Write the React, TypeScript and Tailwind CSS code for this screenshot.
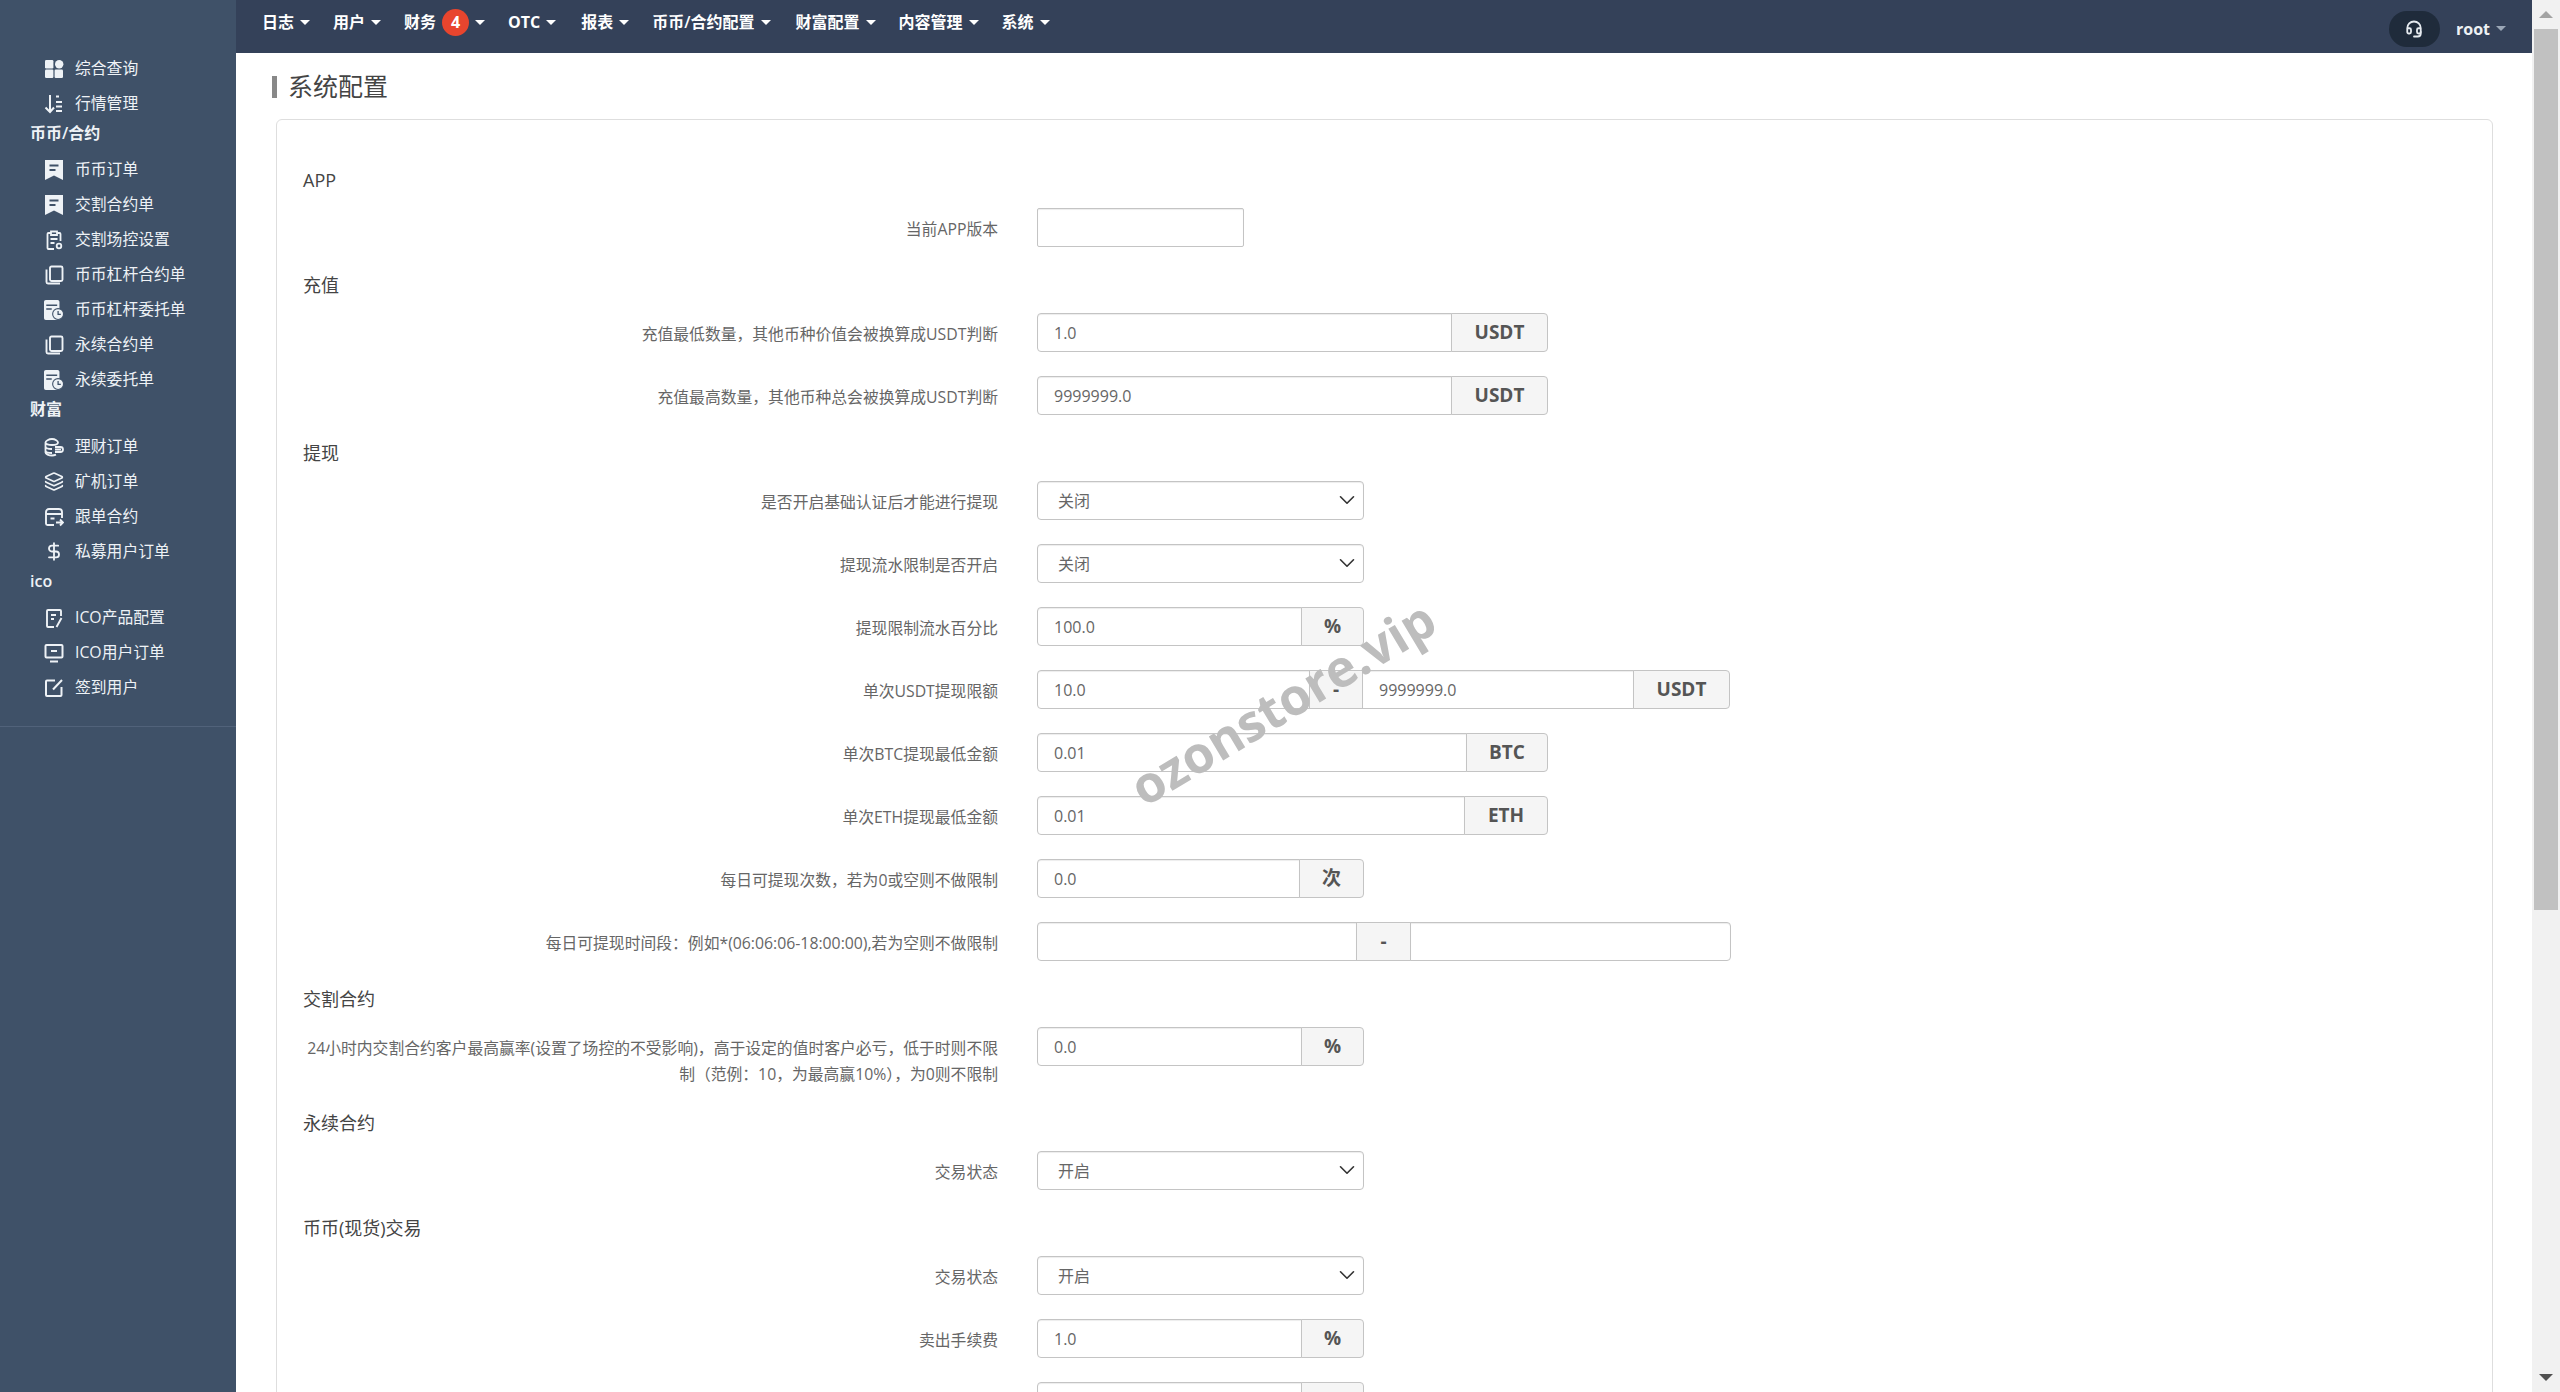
import { ChevronDown, DollarSign, Headset, Layers } from "lucide-react";
import type { ReactNode } from "react";

const FONT = "font-['Open_Sans','Noto_Sans_CJK_SC',sans-serif]";

const NAV: { label: string; badge?: number; className?: string }[] = [
  { label: "日志" },
  { label: "用户" },
  { label: "财务", badge: 4 },
  { label: "OTC", className: "font-bold mr-[2px]" },
  { label: "报表" },
  { label: "币币/合约配置", className: "mr-[2px]" },
  { label: "财富配置" },
  { label: "内容管理" },
  { label: "系统" },
];

function IconDashboard() {
  return (
    <svg viewBox="0 0 20 20" className="w-5 h-5" fill="currentColor">
      <rect x="1" y="1" width="8.4" height="8.4" rx="1.2" />
      <circle cx="15.2" cy="5.2" r="4.2" />
      <rect x="1" y="10.6" width="8.4" height="8.4" rx="1.2" />
      <rect x="10.6" y="10.6" width="8.4" height="8.4" rx="1.2" />
    </svg>
  );
}

function IconSort() {
  return (
    <svg viewBox="0 0 20 20" className="w-5 h-5" fill="none" stroke="currentColor" strokeWidth="2">
      <path d="M6 1v17M1.5 13.5 6 18l4-4.5M12 2.5h3M12 8h6M12 12.5h6M12 17h6" />
    </svg>
  );
}

function IconBookmark() {
  return (
    <svg viewBox="0 0 20 22" className="w-5 h-[22px]" fill="currentColor">
      <path
        fillRule="evenodd"
        d="M1 1h18v20l-9-4.5L1 21zM5.5 5.5v2h9v-2zM5.5 10v2h6v-2z"
      />
    </svg>
  );
}

function IconClipboard() {
  return (
    <svg viewBox="0 0 20 20" className="w-5 h-5" fill="none" stroke="currentColor" strokeWidth="1.8">
      <path d="M7 3H4.5a1 1 0 0 0-1 1v14a1 1 0 0 0 1 1H10M13 3h2.5a1 1 0 0 1 1 1v7M7 1.5h6v3.5H7zM6.5 9h7M6.5 13h4" />
      <circle cx="15" cy="16" r="2.3" />
    </svg>
  );
}

function IconCopy() {
  return (
    <svg viewBox="0 0 20 20" className="w-5 h-5" fill="none" stroke="currentColor" strokeWidth="1.9">
      <rect x="6" y="1.5" width="12.5" height="14.5" rx="1.5" />
      <path d="M2.5 4.5V17a1.5 1.5 0 0 0 1.5 1.5h12" />
    </svg>
  );
}

function IconDocClock() {
  return (
    <svg viewBox="0 0 22 22" className="w-[22px] h-[22px]">
      <path
        fill="currentColor"
        fillRule="evenodd"
        d="M2 0h13a2 2 0 0 1 2 2v18a2 2 0 0 1-2 2H2a2 2 0 0 1-2-2V2a2 2 0 0 1 2-2zM2.5 5v1.6h12V5zM2.5 9v1.6h6V9z"
      />
      <circle cx="15.5" cy="15.5" r="6" fill="currentColor" stroke="#3f5168" strokeWidth="1.2" />
      <path d="M15.5 12v3.8h3" fill="none" stroke="#3f5168" strokeWidth="1.4" />
    </svg>
  );
}

function IconCoins() {
  return (
    <svg viewBox="0 0 20 20" className="w-5 h-5" fill="none" stroke="currentColor" strokeWidth="1.8">
      <path d="M14 5.5C14 7 11.3 8 8 8S1.5 7 1.5 5.5 4.7 2 8 2s6 2 6 3.5zM1.5 5.5v10C1.5 17 4.7 18.5 8 18.5c1.5 0 2.8-.3 4-.8M1.5 9.5C1.5 11 4.7 12 8 12M1.5 13.5C1.5 15 4.7 16 8 16" />
      <path d="M11 10h5.5a2 2 0 0 1 0 5H11M11 12.5h6" />
    </svg>
  );
}

function IconBoxArrow() {
  return (
    <svg viewBox="0 0 20 20" className="w-5 h-5" fill="none" stroke="currentColor" strokeWidth="1.9">
      <path d="M10 18H3.5a1.5 1.5 0 0 1-1.5-1.5V5a3 3 0 0 1 3-3h10a3 3 0 0 1 3 3v6M2 7h16M6.5 11.5h4" />
      <path d="M12 15.5h7M16 12.5l3 3-3 3" />
    </svg>
  );
}

function IconNote() {
  return (
    <svg viewBox="0 0 20 20" className="w-5 h-5" fill="none" stroke="currentColor" strokeWidth="1.9">
      <path d="M17 8V3a1 1 0 0 0-1-1H4a1 1 0 0 0-1 1v15a1 1 0 0 0 1 1h6M7 7h5M7 11h3M17.5 10l-5 9" />
    </svg>
  );
}

function IconMonitor() {
  return (
    <svg viewBox="0 0 20 20" className="w-5 h-5" fill="none" stroke="currentColor" strokeWidth="2">
      <rect x="1.5" y="2" width="17" height="12.5" rx="1" />
      <path d="M7 8h6M6 18.5h8" />
    </svg>
  );
}

function IconEdit() {
  return (
    <svg viewBox="0 0 20 20" className="w-5 h-5" fill="none" stroke="currentColor" strokeWidth="2">
      <path d="M11 2.5H3a1 1 0 0 0-1 1V17a1 1 0 0 0 1 1h13.5a1 1 0 0 0 1-1V9" />
      <path d="M18 2 9 11.5" />
    </svg>
  );
}

const SIDE: { group?: string; label?: string; icon?: ReactNode }[] = [
  { label: "综合查询", icon: <IconDashboard /> },
  { label: "行情管理", icon: <IconSort /> },
  { group: "币币/合约" },
  { label: "币币订单", icon: <IconBookmark /> },
  { label: "交割合约单", icon: <IconBookmark /> },
  { label: "交割场控设置", icon: <IconClipboard /> },
  { label: "币币杠杆合约单", icon: <IconCopy /> },
  { label: "币币杠杆委托单", icon: <IconDocClock /> },
  { label: "永续合约单", icon: <IconCopy /> },
  { label: "永续委托单", icon: <IconDocClock /> },
  { group: "财富" },
  { label: "理财订单", icon: <IconCoins /> },
  { label: "矿机订单", icon: <Layers className="w-[21px] h-[21px]" strokeWidth={2} /> },
  { label: "跟单合约", icon: <IconBoxArrow /> },
  { label: "私募用户订单", icon: <DollarSign className="w-[21px] h-[21px]" strokeWidth={2.2} /> },
  { group: "ico" },
  { label: "ICO产品配置", icon: <IconNote /> },
  { label: "ICO用户订单", icon: <IconMonitor /> },
  { label: "签到用户", icon: <IconEdit /> },
];

function Caret() {
  return (
    <span className="ml-[6px] w-0 h-0 border-x-[5px] border-x-transparent border-t-[5px] border-t-current" />
  );
}

function Sidebar() {
  return (
    <aside className="w-[236px] shrink-0 bg-[#3f5168] text-[#eef2f6]">
      <div className="pt-[51px] pb-[20px] border-b border-b-[#51627a]">
        {SIDE.map((s) =>
          s.group ? (
            <div
              key={s.group}
              className="h-[31.5px] pb-[8px] pl-[30px] flex items-center text-base font-semibold"
            >
              {s.group}
            </div>
          ) : (
            <div key={s.label} className="h-[35px] pl-[44px] flex items-center text-[15.8px]">
              <span className="w-5 flex justify-center">{s.icon}</span>
              <span className="ml-[11px]">{s.label}</span>
            </div>
          ),
        )}
      </div>
    </aside>
  );
}

function Header() {
  return (
    <header className="h-[53px] shrink-0 bg-[#344159] text-white flex items-center pl-[26px] pr-[26px]">
      <nav className="flex items-center gap-[23px] -mt-[9px] text-base font-semibold">
        {NAV.map((n) => (
          <div key={n.label} className={`flex items-center ${n.className ?? ""}`}>
            {n.label}
            {n.badge && (
              <span className="ml-[6px] w-[27px] h-[27px] rounded-full bg-[#e8452e] flex items-center justify-center text-base font-bold">
                {n.badge}
              </span>
            )}
            <Caret />
          </div>
        ))}
      </nav>
      <div className="ml-auto flex items-center mt-[4px]">
        <div className="w-[51px] h-9 rounded-full bg-[#1f2b3b] flex items-center justify-center">
          <Headset className="w-[18px] h-[18px] text-[#e6ebf0]" strokeWidth={2.4} />
        </div>
        <span className="ml-[16px] text-base font-bold text-[#eef1f4]">root</span>
        <span className="flex items-center text-[#9aa6b6]">
          <Caret />
        </span>
      </div>
    </header>
  );
}

const INPUT =
  "h-[39px] px-[16px] bg-white border border-[#c4c4c4] text-base text-[#666] shadow-[inset_0_1px_1px_rgba(0,0,0,0.075)] outline-none";
const ADDON =
  "h-[39px] -ml-px flex items-center justify-center bg-[#f5f5f5] border border-[#c4c4c4] text-[19px] font-bold text-[#555]";

function Field({ label, children, tall }: { label: ReactNode; children: ReactNode; tall?: boolean }) {
  return (
    <div className={`flex items-start gap-[39px] ${tall ? "mb-[22px]" : "mb-[24px]"}`}>
      <label className="w-[695px] shrink-0 pt-[8px] text-right text-[15.8px] leading-[26px] text-[#666]">
        {label}
      </label>
      {children}
    </div>
  );
}

function Group({
  value,
  addon,
  inputWidth,
  addonWidth,
}: { value?: string; addon: string; inputWidth: string; addonWidth: string }) {
  return (
    <div className="flex">
      <input
        readOnly
        value={value ?? ""}
        className={`${INPUT} ${inputWidth} rounded-l-[4px]`}
      />
      <span className={`${ADDON} ${addonWidth} rounded-r-[4px]`}>{addon}</span>
    </div>
  );
}

function Select({ value }: { value: string }) {
  return (
    <div className="relative w-[327px]">
      <select
        value={value}
        onChange={() => {}}
        className={`${INPUT} w-full rounded-[4px] appearance-none px-[20px]`}
      >
        <option>关闭</option>
        <option>开启</option>
      </select>
      <ChevronDown
        className="absolute right-[4px] top-[6px] w-[26px] h-[26px] text-[#333] pointer-events-none"
        strokeWidth={1.5}
      />
    </div>
  );
}

function Section({ title }: { title: string }) {
  return <h3 className="h-[27px] mb-[15px] text-[18px] leading-[28px] text-[#444]">{title}</h3>;
}

function Card() {
  return (
    <div className="ml-[40px] mr-[39px] mt-[21px] shrink-0 border border-[#dedede] rounded-[6px] pt-[46px] pl-[26px]">
      <Section title="APP" />
      <Field label="当前APP版本">
        <input readOnly className={`${INPUT} w-[207px] rounded-[2px]`} />
      </Field>

      <Section title="充值" />
      <Field label="充值最低数量，其他币种价值会被换算成USDT判断">
        <Group value="1.0" addon="USDT" inputWidth="w-[415px]" addonWidth="w-[97px]" />
      </Field>
      <Field label="充值最高数量，其他币种总会被换算成USDT判断">
        <Group value="9999999.0" addon="USDT" inputWidth="w-[415px]" addonWidth="w-[97px]" />
      </Field>

      <Section title="提现" />
      <Field label="是否开启基础认证后才能进行提现">
        <Select value="关闭" />
      </Field>
      <Field label="提现流水限制是否开启">
        <Select value="关闭" />
      </Field>
      <Field label="提现限制流水百分比">
        <Group value="100.0" addon="%" inputWidth="w-[265px]" addonWidth="w-[63px]" />
      </Field>
      <Field label="单次USDT提现限额">
        <div className="flex">
          <input readOnly value="10.0" className={`${INPUT} w-[273px] rounded-l-[4px]`} />
          <span className={`${ADDON} w-[54px]`}>-</span>
          <input readOnly value="9999999.0" className={`${INPUT} w-[272px] -ml-px`} />
          <span className={`${ADDON} w-[97px] rounded-r-[4px]`}>USDT</span>
        </div>
      </Field>
      <Field label="单次BTC提现最低金额">
        <Group value="0.01" addon="BTC" inputWidth="w-[430px]" addonWidth="w-[82px]" />
      </Field>
      <Field label="单次ETH提现最低金额">
        <Group value="0.01" addon="ETH" inputWidth="w-[428px]" addonWidth="w-[84px]" />
      </Field>
      <Field label="每日可提现次数，若为0或空则不做限制">
        <Group value="0.0" addon="次" inputWidth="w-[263px]" addonWidth="w-[65px]" />
      </Field>
      <Field label="每日可提现时间段：例如*(06:06:06-18:00:00),若为空则不做限制">
        <div className="flex">
          <input readOnly className={`${INPUT} w-[320px] rounded-l-[4px]`} />
          <span className={`${ADDON} w-[55px]`}>-</span>
          <input readOnly className={`${INPUT} w-[321px] -ml-px rounded-r-[4px]`} />
        </div>
      </Field>

      <Section title="交割合约" />
      <Field
        tall
        label={
          <>
            24小时内交割合约客户最高赢率(设置了场控的不受影响)，高于设定的值时客户必亏，低于时则不限
            <br />
            制（范例：10，为最高赢10%），为0则不限制
          </>
        }
      >
        <Group value="0.0" addon="%" inputWidth="w-[265px]" addonWidth="w-[63px]" />
      </Field>

      <Section title="永续合约" />
      <Field label="交易状态">
        <Select value="开启" />
      </Field>

      <Section title="币币(现货)交易" />
      <Field label="交易状态">
        <Select value="开启" />
      </Field>
      <Field label="卖出手续费">
        <Group value="1.0" addon="%" inputWidth="w-[265px]" addonWidth="w-[63px]" />
      </Field>
      <Field label="买入手续费">
        <Group value="1.0" addon="%" inputWidth="w-[265px]" addonWidth="w-[63px]" />
      </Field>
    </div>
  );
}

function Scrollbar() {
  return (
    <div className="w-[28px] shrink-0 bg-[#f1f1f1] flex flex-col items-center">
      <div className="h-[29px] shrink-0 flex items-center justify-center">
        <span className="w-0 h-0 border-x-[7px] border-x-transparent border-b-[7px] border-b-[#a3a3a3]" />
      </div>
      <div className="w-[24px] h-[881px] shrink-0 bg-[#c1c1c1]" />
      <div className="mt-auto h-[29px] shrink-0 flex items-center justify-center">
        <span className="w-0 h-0 border-x-[7px] border-x-transparent border-t-[7px] border-t-[#505050]" />
      </div>
    </div>
  );
}

export default function App() {
  return (
    <div className={`${FONT} relative flex h-screen overflow-hidden bg-white`}>
      <Sidebar />
      <main className="flex-1 min-w-0 flex flex-col overflow-hidden">
        <Header />
        <div className="mt-[23px] ml-[36px] h-[22px] shrink-0 flex items-center border-l-[5px] border-l-[#888] pl-[11px] text-[25px] text-[#444]">
          系统配置
        </div>
        <Card />
      </main>
      <Scrollbar />
      {/* watermark sits over the form */}
      <div className="absolute left-[1282px] top-[702px] -translate-x-1/2 -translate-y-1/2 -rotate-[31deg] text-[51px] font-bold text-[#bdbdbd] whitespace-nowrap pointer-events-none">
        ozonstore.vip
      </div>
    </div>
  );
}
